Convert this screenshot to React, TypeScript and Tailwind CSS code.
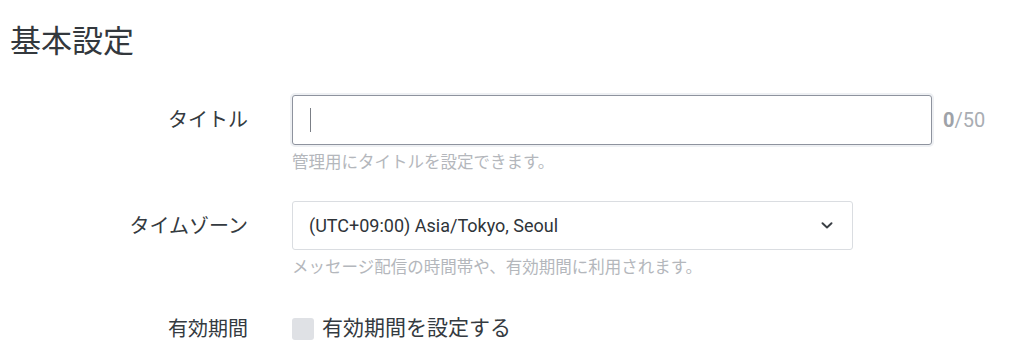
import React from 'react';

const font = { fontFamily: 'Roboto, "Noto Sans CJK JP", sans-serif' };

const Label: React.FC<{ h: string }> = ({ children, h }) => (
  <div className={`flex ${h} items-center justify-end text-[20px] text-[#343a40]`}>{children}</div>
);

export default function App() {
  return (
    <div className="min-h-[359px] w-[1024px] bg-white pl-[10px]" style={font}>
      <h2 className="pt-[19px] text-[31px] leading-[45px] font-normal text-[#33383d]">基本設定</h2>

      <div className="mt-[31px] grid grid-cols-[238px_1fr] gap-x-[44px]">
        {/* title */}
        <Label h="h-[50px]">タイトル</Label>
        <div>
          <div className="flex items-center">
            <div className="flex h-[50px] w-[640px] items-center rounded-[3px] border border-[#8e939e] bg-white pl-[17px] shadow-[0_0_0_2px_#eef0f3]">
              <span className="h-[24px] w-px bg-[#7b7f86]" />
            </div>
            <span className="ml-[11px] text-[20px] text-[#a9adb3]">
              <b className="font-bold text-[#9ea2a8]">0</b>/50
            </span>
          </div>
          <p className="mt-[6px] text-[16.5px] leading-[24px] text-[#b4b7bc]">管理用にタイトルを設定できます。</p>
        </div>

        {/* timezone */}
        <div className="mt-[26px]">
          <Label h="h-[49px]">タイムゾーン</Label>
        </div>
        <div className="mt-[26px]">
          <div className="flex h-[49px] w-[561px] items-center justify-between rounded-[3px] border border-[#dadde1] bg-white pl-[16px] pr-[19px] text-[18px] text-[#2f3439]">
            <span>(UTC+09:00) Asia/Tokyo, Seoul</span>
            <svg width="12" height="7" viewBox="0 0 12 7" fill="none">
              <path d="M1.5 1.2 6 5.5l4.5-4.3" stroke="#3a3f45" strokeWidth="1.9" strokeLinecap="round" strokeLinejoin="round" />
            </svg>
          </div>
          <p className="mt-[6px] text-[16.5px] leading-[24px] text-[#b4b7bc]">
            メッセージ配信の時間帯や、有効期間に利用されます。
          </p>
        </div>

        {/* expiry */}
        <div className="mt-[34px]">
          <Label h="h-[30px]">有効期間</Label>
        </div>
        <div className="mt-[34px] flex h-[30px] items-center">
          <span className="h-[22px] w-[22px] rounded-[3px] bg-[#dfe1e5]" />
          <span className="ml-[8px] text-[21px] text-[#343a40]">有効期間を設定する</span>
        </div>
      </div>
    </div>
  );
}
